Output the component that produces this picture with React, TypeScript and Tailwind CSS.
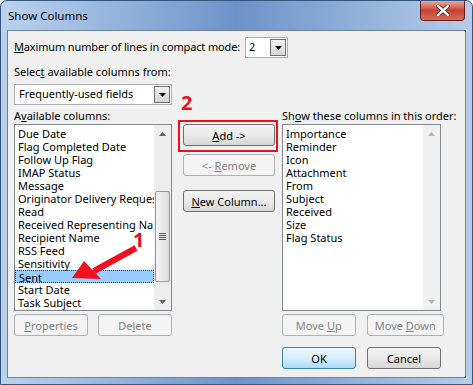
import React from "react";

const font = "font-['Noto_Sans',sans-serif]";

const available = [
  "Due Date",
  "Flag Completed Date",
  "Follow Up Flag",
  "IMAP Status",
  "Message",
  "Originator Delivery Requested",
  "Read",
  "Received Representing Name",
  "Recipient Name",
  "RSS Feed",
  "Sensitivity",
  "Sent",
  "Start Date",
  "Task Subject",
];

const shown = [
  "Importance",
  "Reminder",
  "Icon",
  "Attachment",
  "From",
  "Subject",
  "Received",
  "Size",
  "Flag Status",
];

function Btn({
  children,
  disabled,
  primary,
  className = "",
}: {
  children: React.ReactNode;
  disabled?: boolean;
  primary?: boolean;
  className?: string;
}) {
  let look =
    "border-[#707070] bg-gradient-to-b from-[#f2f2f2] via-[#ebebeb] to-[#d5d5d5] text-black";
  if (disabled) look = "border-[#adb2b5] bg-[#f4f4f4] text-[#838383]";
  if (primary)
    look =
      "border-[#3c7fb1] bg-gradient-to-b from-[#eaf6fd] via-[#d9f0fc] to-[#a7d9f5] text-black";
  return (
    <div
      className={`flex h-[22px] items-center justify-center rounded-[3px] border text-[11px] leading-none ${look} ${className}`}
    >
      <span className="whitespace-pre">{children}</span>
    </div>
  );
}

function Arrow({ dir }: { dir: "up" | "down" }) {
  return (
    <svg width="7" height="4" viewBox="0 0 7 4">
      {dir === "up" ? (
        <path d="M0 4 L3.5 0 L7 4 Z" fill="#606060" />
      ) : (
        <path d="M0 0 L3.5 4 L7 0 Z" fill="#606060" />
      )}
    </svg>
  );
}

function DropButton() {
  return (
    <div className="flex h-[17px] w-[16px] items-center justify-center border border-[#707070] bg-gradient-to-b from-[#f2f2f2] to-[#d5d5d5]">
      <svg width="7" height="4" viewBox="0 0 7 4">
        <path d="M0 0 L3.5 4 L7 0 Z" fill="#000" />
      </svg>
    </div>
  );
}

export default function App() {
  return (
    <div className={`${font} h-[385px] w-[473px] bg-white`}>
      <div className="flex h-[385px] w-[473px] flex-col rounded-t-[7px] border border-[#34557f] bg-gradient-to-r from-[#bcd2ee] via-[#6b93c9] to-[#b6cce9] px-[6px] pb-[6px]">
        {/* title bar */}
        <div className="flex h-[29px] items-start justify-between">
          <div className="pl-[1px] pt-[6px] text-[11.5px] text-black">Show Columns</div>
          <div className="mr-[1px] flex h-[20px] w-[45px] items-center justify-center rounded-b-[4px] border border-t-0 border-[#6b1b1b] bg-gradient-to-b from-[#e9a99a] via-[#c74232] to-[#d16d5c]">
            <svg width="14" height="11" viewBox="0 0 14 11">
              <path
                d="M2 1 L12 10 M12 1 L2 10"
                stroke="#3a2a2a"
                strokeWidth="4"
                strokeLinecap="square"
              />
              <path
                d="M2 1 L12 10 M12 1 L2 10"
                stroke="#fff"
                strokeWidth="2.4"
                strokeLinecap="square"
              />
            </svg>
          </div>
        </div>

        {/* client */}
        <div className="relative flex-1 border border-[#6b7f9e] bg-[#f0f0f0] px-[6px] text-[11px] text-black">
          <div className="mt-[6px] flex h-[21px] items-center">
            <span className="w-[231px] whitespace-nowrap tracking-[-0.15px]">
              <span className="underline">M</span>aximum number of lines in compact mode:
            </span>
            <div className="flex h-[21px] w-[43px] items-center justify-between border border-[#abadb3] bg-white pl-[3px] pr-[1px]">
              <span>2</span>
              <DropButton />
            </div>
          </div>

          <div className="mt-[7px] h-[14px] leading-[14px]">
            Selec<span className="underline">t</span> available columns from:
          </div>
          <div className="mt-[5px] flex h-[21px] w-[158px] items-center justify-between border border-[#abadb3] bg-white pl-[4px] pr-[1px]">
            <span>Frequently-used fields</span>
            <DropButton />
          </div>

          <div className="mt-[4px] flex">
            {/* left column */}
            <div className="flex w-[158px] flex-col">
              <div className="h-[14px] leading-[14px]">
                A<span className="underline">v</span>ailable columns:
              </div>
              <div className="mt-[1px] flex h-[187px] border border-[#828790] bg-white">
                <div className="min-w-0 flex-1 overflow-hidden pt-[2px]">
                  {available.map((t) => (
                    <div
                      key={t}
                      className={`h-[13px] whitespace-nowrap pl-[3px] leading-[13px] ${
                        t === "Sent"
                          ? "border border-dotted border-[#333] bg-[#99ccff] pl-[2px] leading-[11px]"
                          : ""
                      }`}
                    >
                      {t}
                    </div>
                  ))}
                </div>
                <div className="flex w-[17px] shrink-0 flex-col items-center bg-[#ededed]">
                  <div className="flex h-[17px] items-center">
                    <Arrow dir="up" />
                  </div>
                  <div className="mt-[49px] flex h-[91px] w-[15px] items-center justify-center rounded-[2px] border border-[#979797] bg-gradient-to-r from-[#f5f5f5] to-[#dcdcdc]">
                    <div className="flex flex-col gap-[1px]">
                      <div className="h-px w-[7px] bg-[#555]" />
                      <div className="h-px w-[7px] bg-[#555]" />
                      <div className="h-px w-[7px] bg-[#555]" />
                      <div className="h-px w-[7px] bg-[#555]" />
                    </div>
                  </div>
                  <div className="mt-auto flex h-[17px] items-center">
                    <Arrow dir="down" />
                  </div>
                </div>
              </div>
              <div className="mt-[3px] flex justify-between">
                <Btn disabled className="w-[74px]">
                  <span className="underline">P</span>roperties
                </Btn>
                <Btn disabled className="w-[74px]">
                  De<span className="underline">l</span>ete
                </Btn>
              </div>
            </div>

            {/* middle column */}
            <div className="ml-[11px] flex w-[92px] flex-col pt-[15px]">
              <Btn className="w-[92px]">
                <span className="underline">A</span>dd -&gt;
              </Btn>
              <Btn disabled className="mt-[8px] w-[92px]">
                &lt;- <span className="underline">R</span>emove
              </Btn>
              <Btn className="mt-[14px] w-[92px]">
                <span className="underline">N</span>ew Column...
              </Btn>
            </div>

            {/* right column */}
            <div className="ml-[7px] flex w-[162px] flex-col">
              <div className="h-[14px] whitespace-nowrap leading-[14px]">
                Sh<span className="underline">o</span>w these columns in this order:
              </div>
              <div className="mt-[1px] flex h-[187px] w-[159px] border border-[#828790] bg-white">
                <div className="flex-1 pt-[2px]">
                  {shown.map((t) => (
                    <div key={t} className="h-[13px] pl-[3px] leading-[13px]">
                      {t}
                    </div>
                  ))}
                </div>
                <div className="flex w-[17px] flex-col items-center bg-[#f0f0f0]">
                  <div className="flex h-[17px] items-center opacity-40">
                    <Arrow dir="up" />
                  </div>
                  <div className="mt-auto flex h-[17px] items-center opacity-40">
                    <Arrow dir="down" />
                  </div>
                </div>
              </div>
              <div className="mt-[3px] flex gap-[11px]">
                <Btn disabled className="w-[74px]">
                  Move <span className="underline">U</span>p
                </Btn>
                <Btn disabled className="w-[78px]">
                  Move <span className="underline">D</span>own
                </Btn>
              </div>
              <div className="mt-[11px] flex gap-[11px]">
                <Btn primary className="w-[74px]">
                  OK
                </Btn>
                <Btn className="w-[74px]">Cancel</Btn>
              </div>
            </div>
          </div>

          {/* annotations */}
          <div className="pointer-events-none absolute left-[170px] top-[89px] h-[32px] w-[100px] border-2 border-[#e8101e]" />
          <div className="pointer-events-none absolute left-[173px] top-[62px] text-[20px] font-bold leading-none text-[#e8101e]">
            2
          </div>
          <div className="pointer-events-none absolute left-[125px] top-[199px] text-[20px] font-bold leading-none text-[#e8101e]">
            1
          </div>
          <svg
            className="pointer-events-none absolute left-[60px] top-[210px]"
            width="80"
            height="40"
            viewBox="0 0 80 40"
          >
            <path d="M68 7 L26 30" stroke="#f0101e" strokeWidth="6" />
            <path d="M4 37 L16 20 L33 38 Z" fill="#f0101e" />
          </svg>
        </div>
      </div>
    </div>
  );
}
